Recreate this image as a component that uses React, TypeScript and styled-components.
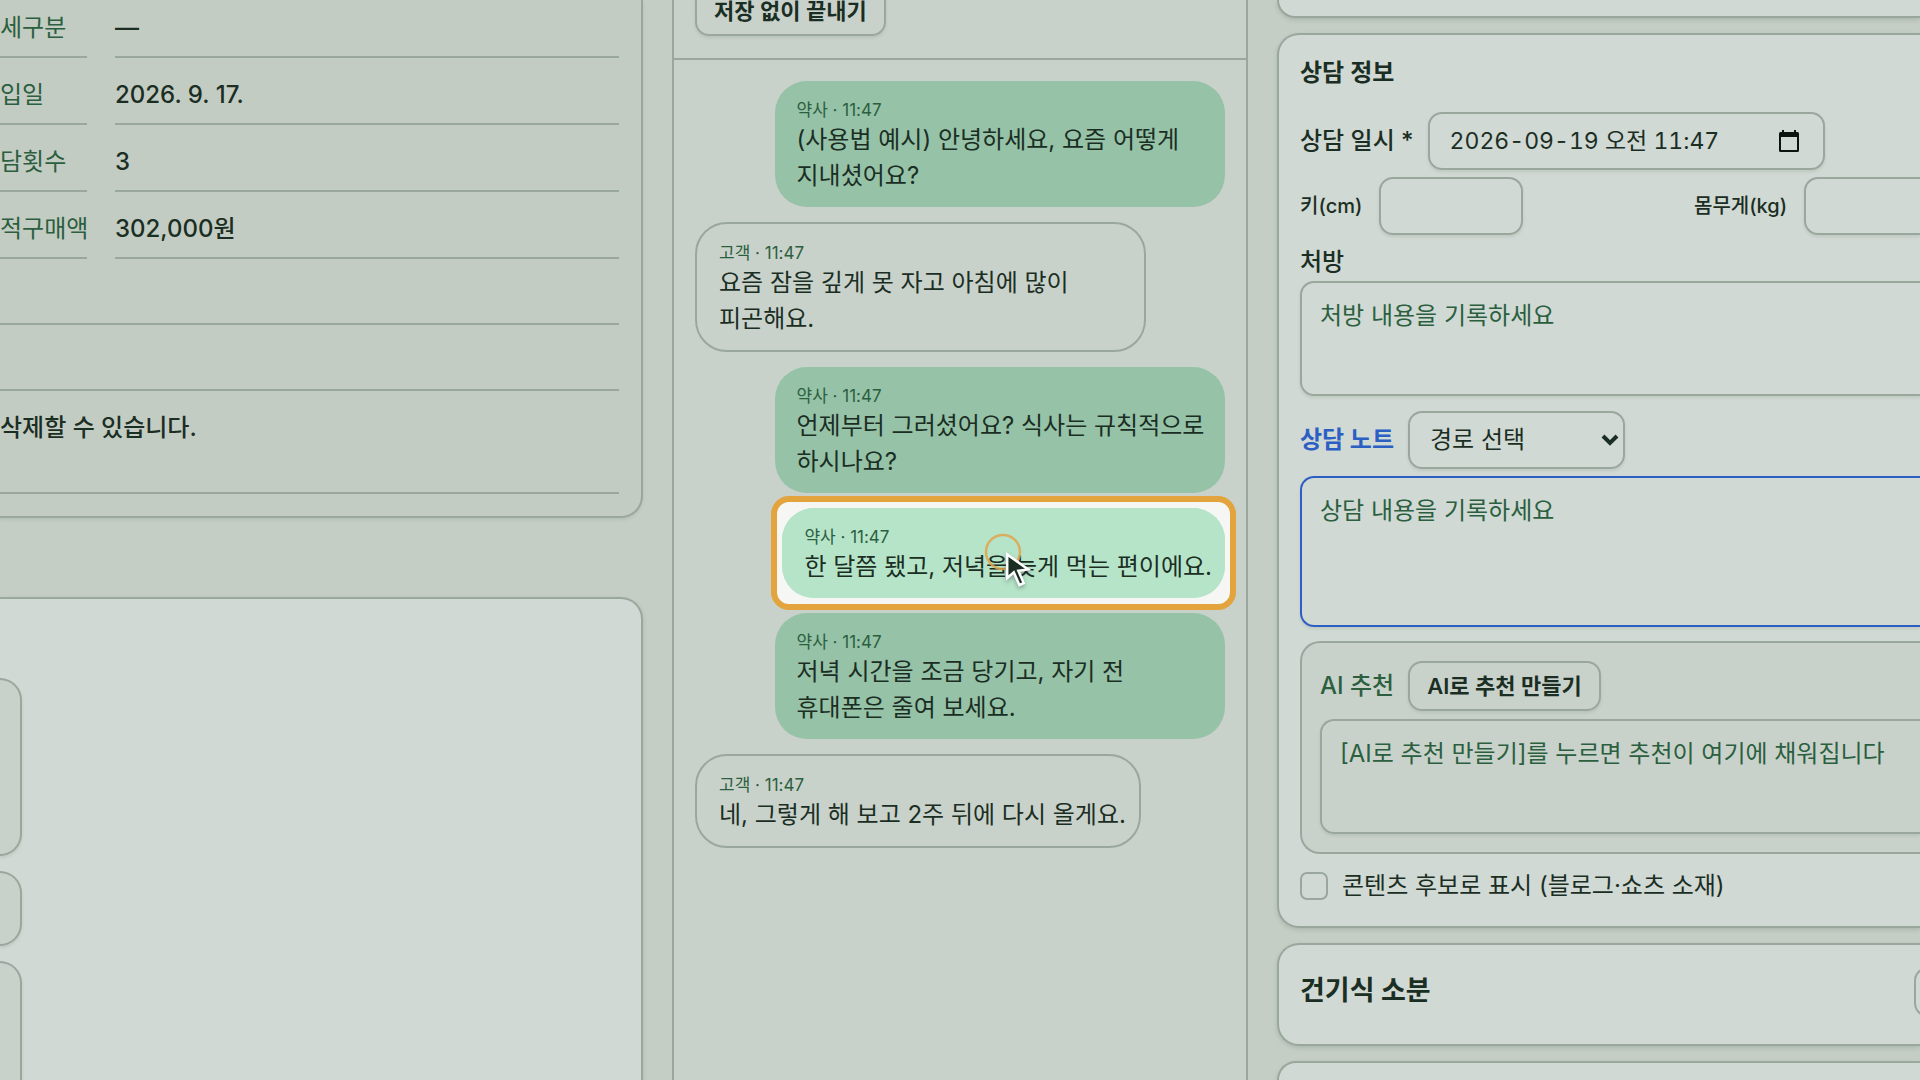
import React from "react";
import styled, { createGlobalStyle, css } from "styled-components";

const c = {
  page: "#c5cec5",
  sunk: "#c3ccc2",
  panel: "#c9d2ca",
  card: "#d0d9d3",
  line: "#9aa79d",
  ink: "#1b2e24",
  green: "#2b5f3f",
  bubble: "#96c2a7",
  bubbleLit: "#b6e4c9",
  blue: "#2c5fc3",
  amber: "#e3a33d",
};

const Global = createGlobalStyle`
  * { box-sizing: border-box; }
  html, body, #root { height: 100%; }
  body {
    margin: 0;
    overflow: hidden;
    background: ${c.page};
    color: ${c.ink};
    font-family: Inter, "Noto Sans CJK KR", sans-serif;
    font-size: 24px;
    line-height: 36px;
  }
  button, input, select, textarea { font: inherit; color: inherit; margin: 0; }
`;

const Screen = styled.main`
  display: grid;
  grid-template-columns: minmax(0, 643fr) minmax(0, 576fr) minmax(0, 643fr);
  column-gap: 29px;
  height: 100vh;
  overflow: hidden;
`;

const shadow = "0 2px 4px rgba(40, 70, 50, 0.16)";
const softShadow = "0 2px 3px rgba(40, 70, 50, 0.1)";

/* left column */
const Left = styled.section`
  display: flex;
  flex-direction: column;
  gap: 79px;
  min-height: 0;
`;

const Customer = styled.div`
  flex: none;
  padding: 0 22px 22px 0;
  background: ${c.sunk};
  border: solid ${c.line};
  border-width: 0 2px 2px 0;
  border-radius: 0 0 22px 0;
  box-shadow: ${softShadow};
`;

const Facts = styled.dl`
  display: grid;
  grid-template-columns: 87px minmax(0, 1fr);
  column-gap: 28px;
  margin: -9px 0 0;
`;

const factCell = css`
  height: 67px;
  margin: 0;
  padding-top: 19px;
  border-bottom: 2px solid ${c.line};
  white-space: nowrap;
`;

const FactName = styled.dt`
  ${factCell}
  color: ${c.green};
`;

const FactValue = styled.dd`
  ${factCell}
  font-weight: 500;
`;

const BlankRow = styled.div`
  height: 66px;
  border-bottom: 2px solid ${c.line};
`;

const Notice = styled.p`
  margin: 0;
  height: 103px;
  padding-top: 19px;
  border-bottom: 2px solid ${c.line};
  font-weight: 500;
`;

const History = styled.div`
  flex: 1;
  display: flex;
  flex-direction: column;
  gap: 15px;
  padding-top: 79px;
  background: ${c.card};
  border: solid ${c.line};
  border-width: 2px 2px 0 0;
  border-radius: 0 22px 0 0;
  box-shadow: ${shadow};
`;

const HistoryItem = styled.div<{ $h: number }>`
  flex: none;
  width: 22px;
  height: ${(p) => p.$h}px;
  background: ${c.panel};
  border: 2px solid ${c.line};
  border-left: 0;
  border-radius: 0 22px 22px 0;
  box-shadow: ${softShadow};
`;

/* middle column */
const Chat = styled.section`
  min-height: 0;
  background: ${c.panel};
  border: solid ${c.line};
  border-width: 0 2px;
`;

const ChatHead = styled.header`
  display: flex;
  align-items: flex-end;
  height: 60px;
  padding: 0 21px 22px;
  border-bottom: 2px solid ${c.line};
`;

const Button = styled.button`
  flex: none;
  height: 50px;
  padding: 0 17px;
  border: 2px solid ${c.line};
  border-radius: 14px;
  background: transparent;
  box-shadow: ${softShadow};
  font-size: 22px;
  font-weight: 600;
  line-height: 30px;
  white-space: nowrap;
`;

const Messages = styled.ol`
  display: flex;
  flex-direction: column;
  gap: 15px;
  margin: 0;
  padding: 21px;
  list-style: none;
`;

const Bubble = styled.li<{ $mine?: boolean; $lit?: boolean }>`
  position: relative;
  max-width: 85%;
  padding: 17px 13px 13px 22px;
  border-radius: 32px;
  align-self: ${(p) => (p.$mine ? "flex-end" : "flex-start")};
  background: ${(p) => (p.$lit ? c.bubbleLit : p.$mine ? c.bubble : "transparent")};
  border: ${(p) => (p.$mine ? "0" : `2px solid ${c.line}`)};
  word-break: keep-all;
`;

const Meta = styled.div`
  font-size: 17px;
  line-height: 24px;
  color: ${c.green};
`;

const Spotlight = styled.div`
  position: absolute;
  z-index: -2;
  inset: -12px -11px;
  border: 6px solid ${c.amber};
  border-radius: 18px;
  background: #f6f7f5;
`;

const LitFill = styled.div`
  position: absolute;
  z-index: -1;
  inset: 0;
  border-radius: 32px;
  background: ${c.bubbleLit};
`;

const Stack = styled.div`
  position: relative;
  z-index: 0;
`;

const Pointer = styled.svg`
  position: absolute;
  right: 188px;
  top: 24px;
  width: 54px;
  height: 64px;
  overflow: visible;
`;

const Arrow = styled.path`
  filter: drop-shadow(0 2px 2px rgba(0, 0, 0, 0.3));
`;

/* right column */
const Right = styled.section`
  display: flex;
  flex-direction: column;
  gap: 15px;
  min-height: 0;
`;

const Card = styled.section`
  flex: none;
  padding: 22px 0 22px 21px;
  background: ${c.card};
  border: 2px solid ${c.line};
  border-right: 0;
  border-radius: 22px 0 0 22px;
  box-shadow: ${shadow};
`;

const CardAbove = styled(Card)`
  height: 18px;
  padding: 0;
  border-top: 0;
  border-radius: 0 0 0 22px;
`;

const CardBelow = styled(Card)`
  flex: 1;
  padding: 0;
  border-bottom: 0;
  border-radius: 22px 0 0 0;
`;

const Title = styled.h3`
  margin: 0 0 23px;
  font-size: 24px;
  line-height: 32px;
  font-weight: 600;
`;

const Row = styled.div`
  display: flex;
  align-items: center;
  gap: 14px;
`;

const Measures = styled.div`
  display: grid;
  grid-template-columns: minmax(0, 394fr) minmax(0, 226fr);
  margin: 7px 0 9px;
`;

const MeasureField = styled(Row)`
  gap: 17px;
`;

const Label = styled.label<{ $tone?: "blue" | "green"; $small?: boolean }>`
  flex: none;
  font-weight: ${(p) => (p.$tone === "blue" ? 700 : 500)};
  font-size: ${(p) => (p.$small ? 20 : 24)}px;
  color: ${(p) => (p.$tone ? c[p.$tone] : "inherit")};
  white-space: nowrap;
`;

const BlockLabel = styled(Label)`
  display: block;
  margin-bottom: 1px;
  line-height: 36px;
`;

const field = css`
  border: 2px solid ${c.line};
  border-radius: 14px;
  background: transparent;
  box-shadow: ${softShadow};
  outline: none;
`;

const DateBox = styled.div`
  ${field}
  display: flex;
  align-items: center;
  width: 397px;
  height: 58px;
  padding: 0 24px 0 20px;
`;

const DateInput = styled.input`
  flex: 1;
  min-width: 0;
  padding: 0;
  border: 0;
  outline: none;
  background: transparent;
  font-size: 23px;
  font-variant-numeric: tabular-nums;
`;

const NumberInput = styled.input<{ $wide?: boolean }>`
  ${field}
  width: 144px;
  min-width: 0;
  height: 58px;
  ${(p) =>
    p.$wide &&
    css`
      flex: 1;
      border-right: 0;
      border-radius: 14px 0 0 14px;
    `}
`;

const SelectBox = styled.div`
  position: relative;
`;

const Select = styled.select`
  ${field}
  appearance: none;
  display: block;
  width: 217px;
  height: 58px;
  padding: 0 20px;
`;

const Chevron = styled.svg`
  position: absolute;
  right: 6px;
  top: 22px;
  width: 18px;
  height: 14px;
  pointer-events: none;
`;

const TextArea = styled.textarea<{ $h: number; $active?: boolean }>`
  ${field}
  display: block;
  width: 100%;
  height: ${(p) => p.$h}px;
  padding: 15px 18px;
  border-color: ${(p) => (p.$active ? c.blue : c.line)};
  border-right: 0;
  border-radius: 14px 0 0 14px;
  resize: none;
  &::placeholder {
    color: ${c.green};
    opacity: 1;
  }
`;

const NoteRow = styled(Row)`
  margin: 15px 0 7px;
`;

const AiBox = styled.div`
  margin: 14px 0;
  padding: 18px 0 18px 18px;
  background: ${c.panel};
  border: 2px solid ${c.line};
  border-right: 0;
  border-radius: 20px 0 0 20px;
`;

const AiRow = styled(Row)`
  margin-bottom: 8px;
`;

const Check = styled.input`
  appearance: none;
  width: 28px;
  height: 28px;
  border: 2px solid ${c.line};
  border-radius: 7px;
  background: transparent;
`;

const SplitHead = styled.div`
  display: flex;
  align-items: flex-start;
  justify-content: space-between;
  height: 55px;
`;

const SplitTitle = styled.h2`
  margin: 6px 0 0;
  font-size: 27px;
  line-height: 36px;
  font-weight: 700;
`;

const EdgeButton = styled(Button)`
  width: 60px;
  margin-right: -54px;
  box-shadow: none;
`;

const facts = [
  ["세구분", "—"],
  ["입일", "2026. 9. 17."],
  ["담횟수", "3"],
  ["적구매액", "302,000원"],
];

const messages = [
  { mine: true, text: "(사용법 예시) 안녕하세요, 요즘 어떻게 지내셨어요?" },
  { mine: false, text: "요즘 잠을 깊게 못 자고 아침에 많이 피곤해요." },
  { mine: true, text: "언제부터 그러셨어요? 식사는 규칙적으로 하시나요?" },
  { mine: true, lit: true, text: "한 달쯤 됐고, 저녁을 늦게 먹는 편이에요." },
  { mine: true, text: "저녁 시간을 조금 당기고, 자기 전 휴대폰은 줄여 보세요." },
  { mine: false, text: "네, 그렇게 해 보고 2주 뒤에 다시 올게요." },
];

export default function App() {
  return (
    <>
      <Global />
      <Screen>
        <Left>
          <Customer>
            <Facts>
              {facts.map(([name, value]) => (
                <React.Fragment key={name}>
                  <FactName>{name}</FactName>
                  <FactValue>{value}</FactValue>
                </React.Fragment>
              ))}
            </Facts>
            <BlankRow />
            <BlankRow />
            <Notice>삭제할 수 있습니다.</Notice>
          </Customer>
          <History>
            <HistoryItem $h={178} />
            <HistoryItem $h={75} />
            <HistoryItem $h={178} />
          </History>
        </Left>

        <Chat>
          <ChatHead>
            <Button type="button">저장 없이 끝내기</Button>
          </ChatHead>
          <Stack>
            <Messages>
              {messages.map((m) => (
                <Bubble key={m.text} $mine={m.mine} $lit={m.lit}>
                  {m.lit && (
                    <>
                      <Spotlight />
                      <LitFill />
                    </>
                  )}
                  <Meta>{m.mine ? "약사" : "고객"} · 11:47</Meta>
                  {m.text}
                  {m.lit && (
                    <Pointer viewBox="0 0 54 64" aria-hidden="true">
                      <circle
                        cx="20"
                        cy="20"
                        r="17"
                        fill="none"
                        stroke="#e0a54c"
                        strokeOpacity="0.85"
                        strokeWidth="2.5"
                      />
                      <Arrow
                        d="M24.2 22.4V46l6.6-5.6L36.4 53l4.3-1.9-5.4-12.3 9.9-1.4z"
                        fill={c.ink}
                        stroke="#fff"
                        strokeWidth="2.5"
                      />
                    </Pointer>
                  )}
                </Bubble>
              ))}
            </Messages>
          </Stack>
        </Chat>

        <Right>
          <CardAbove />
          <Card>
            <Title>상담 정보</Title>
            <Row>
              <Label htmlFor="when">상담 일시 *</Label>
              <DateBox>
                <DateInput id="when" defaultValue="2026-09-19 오전 11:47" />
                <svg width="20" height="22" viewBox="0 0 20 22" aria-hidden="true">
                  <path
                    fill="#0c1410"
                    fillRule="evenodd"
                    d="M3 0h2v2h10V0h2v2h1.500a1.500 1.500 0 0 1 1.500 1.500v17a1.500 1.500 0 0 1-1.500 1.500h-17a1.500 1.500 0 0 1-1.500-1.500v-17a1.500 1.500 0 0 1 1.500-1.500H3zM2 7v13h16V7z"
                  />
                </svg>
              </DateBox>
            </Row>
            <Measures>
              <MeasureField>
                <Label htmlFor="height" $small>키(cm)</Label>
                <NumberInput id="height" />
              </MeasureField>
              <MeasureField>
                <Label htmlFor="weight" $small>몸무게(kg)</Label>
                <NumberInput id="weight" $wide />
              </MeasureField>
            </Measures>
            <BlockLabel htmlFor="rx">처방</BlockLabel>
            <TextArea id="rx" $h={115} placeholder="처방 내용을 기록하세요" />
            <NoteRow>
              <Label htmlFor="note" $tone="blue">상담 노트</Label>
              <SelectBox>
                <Select aria-label="경로 선택">
                  <option>경로 선택</option>
                </Select>
                <Chevron viewBox="0 0 18 14" aria-hidden="true">
                  <path d="M2 3l7 7 7-7" fill="none" stroke={c.ink} strokeWidth="4" />
                </Chevron>
              </SelectBox>
            </NoteRow>
            <TextArea id="note" $h={151} $active placeholder="상담 내용을 기록하세요" />
            <AiBox>
              <AiRow>
                <Label htmlFor="ai" $tone="green">AI 추천</Label>
                <Button type="button">AI로 추천 만들기</Button>
              </AiRow>
              <TextArea id="ai" $h={115} placeholder="[AI로 추천 만들기]를 누르면 추천이 여기에 채워집니다" />
            </AiBox>
            <Row as="label">
              <Check type="checkbox" />
              콘텐츠 후보로 표시 (블로그·쇼츠 소재)
            </Row>
          </Card>
          <Card>
            <SplitHead>
              <SplitTitle>건기식 소분</SplitTitle>
              <EdgeButton type="button" aria-label="건기식 소분 열기" />
            </SplitHead>
          </Card>
          <CardBelow />
        </Right>
      </Screen>
    </>
  );
}
